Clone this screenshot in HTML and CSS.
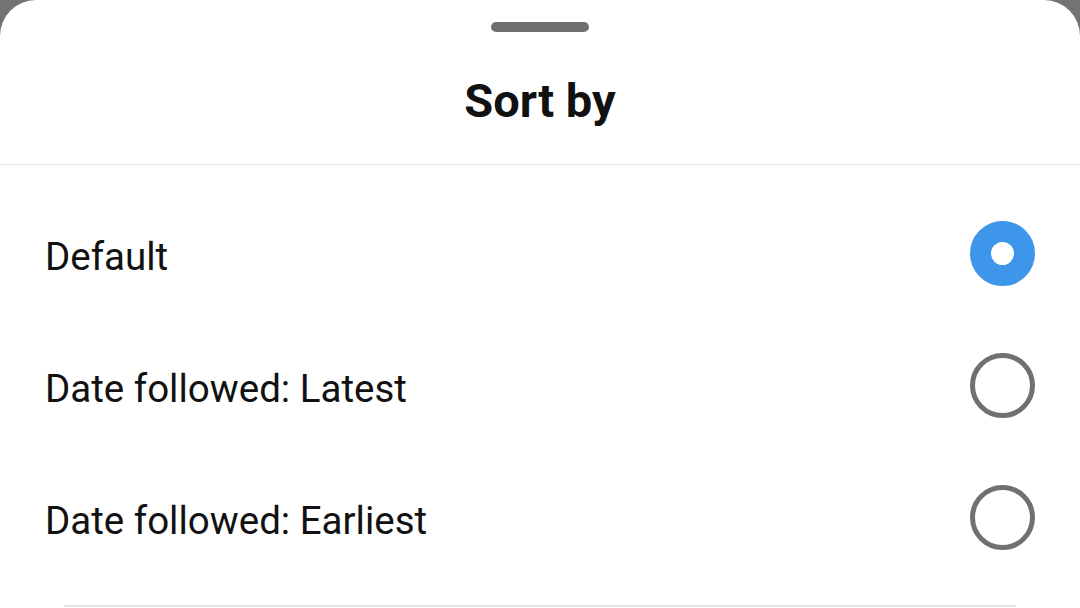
FILE: index.html
```html
<!DOCTYPE html>
<html lang="en">
<head>
  <meta charset="UTF-8">
  <meta name="viewport" content="width=device-width, initial-scale=1.0">
  <title>Sort by</title>
  <link rel="stylesheet" href="styles.css">
</head>
<body>

  <div class="sheet">
    <div class="sheet-header">
      <div class="handle"></div>
      <h1>Sort by</h1>
    </div>

    <div class="options">
      <div class="option">
        <span class="label">Default</span>
        <span class="radio checked"></span>
      </div>
      <div class="option">
        <span class="label">Date followed: Latest</span>
        <span class="radio"></span>
      </div>
      <div class="option">
        <span class="label">Date followed: Earliest</span>
        <span class="radio"></span>
      </div>
    </div>

    <div class="footer-line"></div>
  </div>

</body>
</html>
```

FILE: styles.css
```css
html, body {
  margin: 0;
  height: 100%;
}
body {
  font-family: Roboto, "Liberation Sans", sans-serif;
  background-color: #737373;
  color: #111;
  overflow: hidden;
}
.sheet {
  background: white;
  border-radius: 36px 36px 0 0;
  height: 100%;
  box-sizing: border-box;
}
.sheet-header {
  height: 165px;
  border-bottom: 1px solid #e2e2e2;
  display: flex;
  flex-direction: column;
  align-items: center;
  padding-top: 22px;
  box-sizing: border-box;
}
.handle {
  width: 98px;
  height: 10px;
  border-radius: 5px;
  background: #707070;
}
h1 {
  margin: 41px 0 0;
  font-size: 47px;
  font-weight: bold;
  line-height: 56px;
}
.options {
  padding: 22px 45px 0 45px;
}
.option {
  height: 132px;
  display: flex;
  align-items: center;
  justify-content: space-between;
}
.label {
  font-size: 38.5px;
  padding-top: 7px;
}
.radio {
  width: 65px;
  height: 65px;
  border-radius: 50%;
  border: 5px solid #707070;
  box-sizing: border-box;
}
.radio.checked {
  border: 21px solid #3d96e9;
  background: white;
}
.footer-line {
  margin: 22px 64px 0;
  border-top: 2px solid #e4e4e4;
}
```
